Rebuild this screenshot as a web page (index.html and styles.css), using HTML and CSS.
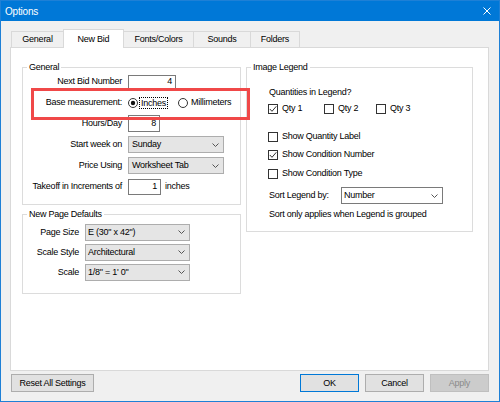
FILE: index.html
```html
<!DOCTYPE html>
<html>
<head>
<meta charset="utf-8">
<title>Options</title>
<link rel="stylesheet" href="styles.css">
</head>
<body>
<div class="window">
  <div class="titlebar">
    <span class="title">Options</span>
    <svg class="close" width="8" height="8" viewBox="0 0 8 8"><path d="M0.5 0.5L7.5 7.5M7.5 0.5L0.5 7.5" stroke="#fff" stroke-width="1" fill="none"/></svg>
  </div>
  <div class="client">
    <div class="tabs">
      <div class="tab t-general">General</div>
      <div class="tab t-newbid active">New Bid</div>
      <div class="tab t-fonts">Fonts/Colors</div>
      <div class="tab t-sounds">Sounds</div>
      <div class="tab t-folders">Folders</div>
    </div>
    <div class="panel">
      <div class="col-left">
        <div class="group g-general">
          <div class="group-title">General</div>
          <div class="form-grid">
            <div class="lbl">Next Bid Number</div>
            <div class="tb tb-bid">4</div>

            <div class="lbl">Base measurement:</div>
            <div class="radios">
              <svg class="radio" width="10" height="10" viewBox="0 0 10 10"><circle cx="5" cy="5" r="4.5" fill="#fff" stroke="#333"/><circle cx="5" cy="5" r="2.2" fill="#111"/></svg>
              <span class="focus">Inches</span>
              <svg class="radio r2" width="10" height="10" viewBox="0 0 10 10"><circle cx="5" cy="5" r="4.5" fill="#fff" stroke="#333"/></svg>
              <span>Millimeters</span>
            </div>

            <div class="lbl">Hours/Day</div>
            <div class="tb tb-hours">8</div>

            <div class="lbl">Start week on</div>
            <div class="dd dd-week"><span>Sunday</span><svg width="7" height="4" viewBox="0 0 7 4"><path d="M0.5 0.5L3.5 3.5L6.5 0.5" stroke="#555" fill="none"/></svg></div>

            <div class="lbl">Price Using</div>
            <div class="dd dd-week"><span>Worksheet Tab</span><svg width="7" height="4" viewBox="0 0 7 4"><path d="M0.5 0.5L3.5 3.5L6.5 0.5" stroke="#555" fill="none"/></svg></div>

            <div class="lbl">Takeoff in Increments of</div>
            <div class="inc"><div class="tb tb-inc">1</div><span class="unit">inches</span></div>
          </div>
        </div>

        <div class="group g-page">
          <div class="group-title">New Page Defaults</div>
          <div class="page-grid">
            <div class="lbl">Page Size</div>
            <div class="dd dd-page"><span>E (30" x 42")</span><svg width="7" height="4" viewBox="0 0 7 4"><path d="M0.5 0.5L3.5 3.5L6.5 0.5" stroke="#555" fill="none"/></svg></div>
            <div class="lbl">Scale Style</div>
            <div class="dd dd-page"><span>Architectural</span><svg width="7" height="4" viewBox="0 0 7 4"><path d="M0.5 0.5L3.5 3.5L6.5 0.5" stroke="#555" fill="none"/></svg></div>
            <div class="lbl">Scale</div>
            <div class="dd dd-page"><span>1/8" = 1' 0"</span><svg width="7" height="4" viewBox="0 0 7 4"><path d="M0.5 0.5L3.5 3.5L6.5 0.5" stroke="#555" fill="none"/></svg></div>
          </div>
        </div>
      </div>

      <div class="col-right">
        <div class="group g-legend">
          <div class="group-title">Image Legend</div>
          <div class="legend-body">
            <div class="q-title">Quantities in Legend?</div>
            <div class="qty-row">
              <div class="chk w56"><span class="box"><svg width="8" height="8" viewBox="0 0 8 8"><path d="M0.8 4L3 6.3L7.3 1.3" stroke="#333" stroke-width="1" fill="none"/></svg></span>Qty 1</div>
              <div class="chk w52"><span class="box"></span>Qty 2</div>
              <div class="chk"><span class="box"></span>Qty 3</div>
            </div>
            <div class="chk cb-row r-first"><span class="box"></span>Show Quantity Label</div>
            <div class="chk cb-row r-second"><span class="box"><svg width="8" height="8" viewBox="0 0 8 8"><path d="M0.8 4L3 6.3L7.3 1.3" stroke="#333" stroke-width="1" fill="none"/></svg></span>Show Condition Number</div>
            <div class="chk cb-row r-third"><span class="box"></span>Show Condition Type</div>
            <div class="sort-row">
              <span class="sort-lbl">Sort Legend by:</span>
              <div class="dd dd-sort"><span>Number</span><svg width="7" height="4" viewBox="0 0 7 4"><path d="M0.5 0.5L3.5 3.5L6.5 0.5" stroke="#555" fill="none"/></svg></div>
            </div>
            <div class="note">Sort only applies when Legend is grouped</div>
          </div>
        </div>
      </div>
    </div>
    <div class="footer">
      <button class="btn b-reset">Reset All Settings</button>
      <div class="btn-group">
        <button class="btn b-ok">OK</button>
        <button class="btn">Cancel</button>
        <button class="btn b-apply">Apply</button>
      </div>
    </div>
  </div>
  <div class="highlight"></div>
</div>
</body>
</html>
```

FILE: styles.css
```css
* { box-sizing: border-box; }
html, body { margin: 0; padding: 0; }
body {
  width: 500px;
  height: 402px;
  overflow: hidden;
  font-family: "Liberation Sans", Arial, sans-serif;
  font-size: 9px;
  letter-spacing: -0.25px;
  color: #000;
  background: #fff;
}
.window {
  position: relative;
  width: 500px;
  height: 402px;
  border: 1px solid #1e80d6;
  background: #f0f0f0;
  display: flex;
  flex-direction: column;
}
.titlebar {
  flex: none;
  height: 20px;
  background: #0078d7;
  color: #fff;
  display: flex;
  align-items: center;
  justify-content: space-between;
  padding: 0 8px 0 4px;
  font-size: 10px;
  letter-spacing: -0.2px;
}
.close { display: block; }
.client {
  flex: 1;
  display: flex;
  flex-direction: column;
  padding: 8px 10px 9px 9px;
}
.tabs {
  flex: none;
  height: 18px;
  display: flex;
  align-items: flex-end;
  padding-left: 1px;
}
.tab {
  height: 16px;
  border: 1px solid #d9d9d9;
  border-bottom: none;
  background: #f0f0f0;
  display: flex;
  align-items: center;
  justify-content: center;
  margin-left: -1px;
  line-height: 11px;
}
.tab:first-child { margin-left: 0; }
.tab.active {
  height: 19px;
  margin-bottom: -1px;
  padding-top: 1px;
  background: #fff;
  position: relative;
  z-index: 1;
}
.t-general { width: 53px; }
.t-newbid { width: 61px; }
.t-fonts { width: 71px; }
.t-sounds { width: 58px; }
.t-folders { width: 50px; }

.panel {
  flex: none;
  height: 324px;
  border: 1px solid #d9d9d9;
  background: #fff;
  display: flex;
  align-items: flex-start;
  gap: 5px;
  padding: 19px 0 0 11px;
}
.col-left {
  width: 219px;
  display: flex;
  flex-direction: column;
  gap: 9px;
}
.col-right { width: 227px; }

.group {
  border: 1px solid #dcdcdc;
  line-height: 11px;
}
.group-title {
  display: table;
  margin: -6px 0 0 4px;
  padding: 0 2px;
  background: #fff;
  line-height: 11px;
}
.g-general { padding-bottom: 7px; }
.g-page { padding-bottom: 11px; }
.g-legend { padding-bottom: 11px; }

.form-grid {
  margin-top: -2px;
  display: grid;
  grid-template-columns: 99px auto;
  column-gap: 6px;
  grid-auto-rows: 21px;
  align-items: center;
  justify-items: start;
}
.page-grid {
  margin-top: 2px;
  display: grid;
  grid-template-columns: 56px auto;
  column-gap: 6px;
  grid-auto-rows: 20px;
  align-items: center;
  justify-items: start;
}
.lbl { justify-self: end; white-space: nowrap; }

.tb {
  border: 1px solid #7a7a7a;
  background: #fff;
  display: flex;
  align-items: center;
  justify-content: flex-end;
  padding-right: 3px;
}
.tb-bid { width: 48px; height: 14px; }
.tb-hours { width: 32px; height: 17px; }
.tb-inc { width: 33px; height: 16px; }
.inc { display: flex; align-items: center; }
.unit { margin-left: 4px; }

.radios { display: flex; align-items: center; }
.radio { display: block; flex: none; }
.focus {
  border: 1px dotted #000;
  padding: 0 1px;
  margin-left: 1px;
  line-height: 10px;
}
.r2 { margin-left: 10px; margin-right: 3px; }

.dd {
  display: flex;
  align-items: center;
  justify-content: space-between;
  height: 17px;
  background: #e5e5e5;
  border: 1px solid #adadad;
  padding: 0 4px 0 3px;
}
.dd svg { display: block; flex: none; }
.dd-week { width: 96px; }
.dd-page { width: 105px; padding-left: 2px; }
.dd-sort {
  width: 102px;
  background: #fff;
  border-color: #7a7a7a;
  padding-left: 2px;
}

.legend-body { padding-left: 22px; }
.q-title { margin-top: 14px; height: 11px; }
.qty-row { display: flex; height: 11px; margin-top: 5px; margin-left: -1px; }
.chk { display: flex; align-items: center; height: 11px; white-space: nowrap; }
.w56 { width: 56px; }
.w52 { width: 52px; }
.box {
  width: 10px;
  height: 10px;
  border: 1px solid #333;
  background: #fff;
  margin-right: 4px;
  flex: none;
  display: flex;
  align-items: center;
  justify-content: center;
}
.box svg { display: block; }
.cb-row { margin-left: -1px; }
.r-first { margin-top: 17px; }
.r-second { margin-top: 7px; }
.r-third { margin-top: 8px; }
.sort-row { display: flex; align-items: center; height: 17px; margin-top: 8px; }
.sort-lbl { width: 72px; }
.note { margin-top: 5px; height: 11px; }

.footer {
  flex: none;
  margin-top: 3px;
  height: 18px;
  display: flex;
  justify-content: space-between;
  padding-left: 1px;
}
.btn-group { display: flex; gap: 6px; }
.btn {
  font: inherit;
  letter-spacing: inherit;
  color: #000;
  height: 18px;
  width: 59px;
  padding: 0;
  margin: 0;
  border: 1px solid #adadad;
  background: #e1e1e1;
  display: flex;
  align-items: center;
  justify-content: center;
}
.b-reset { width: 83px; }
.b-ok { border-color: #0078d7; }
.b-apply { background: #cccccc; border-color: #bfbfbf; color: #8a8a8a; }

.highlight {
  position: absolute;
  left: 30px;
  top: 87px;
  width: 219px;
  height: 32px;
  border: 3px solid #f04848;
}
```
